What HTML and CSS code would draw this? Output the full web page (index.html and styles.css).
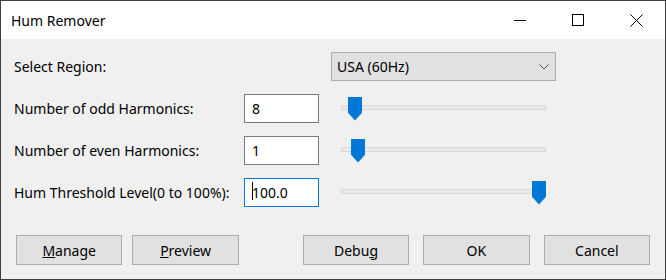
FILE: index.html
```html
<!DOCTYPE html>
<html lang="en">
<head>
  <meta charset="UTF-8" />
  <title>Hum Remover</title>
  <link rel="stylesheet" href="styles.css">
</head>
<body>
  <div class="window">
    <div class="titlebar">
      <span class="title">Hum Remover</span>
      <div class="caption">
        <span class="cap-btn">
          <svg width="12" height="12" viewBox="0 0 12 12"><path d="M0 6.5h12" stroke="#000" stroke-width="1"/></svg>
        </span>
        <span class="cap-btn">
          <svg width="12" height="12" viewBox="0 0 12 12"><rect x="0.5" y="0.5" width="11" height="11" fill="none" stroke="#000"/></svg>
        </span>
        <span class="cap-btn">
          <svg width="13" height="13" viewBox="0 0 13 13"><path d="M0.5 0.5l12 12M12.5 0.5l-12 12" stroke="#000" stroke-width="1"/></svg>
        </span>
      </div>
    </div>

    <div class="content">
      <div class="row">
        <label class="label">Select Region:</label>
        <div class="select">
          <span>USA (60Hz)</span>
          <svg width="10" height="6" viewBox="0 0 10 6"><path d="M0.5 0.5l4.5 4.5 4.5-4.5" fill="none" stroke="#555"/></svg>
        </div>
      </div>

      <div class="row">
        <label class="label" for="odd">Number of odd Harmonics:</label>
        <span class="textbox"><input id="odd" type="text" value="8" readonly></span>
        <div class="slider"><div class="track"></div><span class="thumb" style="left: 7px"></span></div>
      </div>

      <div class="row">
        <label class="label" for="even">Number of even Harmonics:</label>
        <span class="textbox"><input id="even" type="text" value="1" readonly></span>
        <div class="slider"><div class="track"></div><span class="thumb" style="left: 10px"></span></div>
      </div>

      <div class="row">
        <label class="label" for="thresh">Hum Threshold Level(0 to 100%):</label>
        <span class="textbox focused"><input id="thresh" type="text" value="100.0" readonly><span class="caret"></span></span>
        <div class="slider"><div class="track"></div><span class="thumb" style="left: 191px"></span></div>
      </div>

      <div class="buttons">
        <button class="btn"><u>M</u>anage</button>
        <button class="btn"><u>P</u>review</button>
        <button class="btn push">Debu<u>g</u></button>
        <button class="btn">OK</button>
        <button class="btn">Cancel</button>
      </div>
    </div>
  </div>
</body>
</html>
```

FILE: styles.css
```css
body {
  margin: 0;
  font-family: "Segoe UI", "Noto Sans", sans-serif;
  font-size: 14px;
  color: #000;
}
.window {
  width: 666px;
  height: 280px;
  box-sizing: border-box;
  border: 1px solid #3f3f3f;
  display: flex;
  flex-direction: column;
  background: #f0f0f0;
}
.titlebar {
  height: 38px;
  background: #fff;
  display: flex;
  align-items: center;
}
.title {
  padding-left: 10px;
  font-size: 14px;
}
.caption {
  margin-left: auto;
  display: flex;
  height: 100%;
}
.cap-btn {
  width: 58px;
  display: flex;
  align-items: center;
  justify-content: center;
}
.content {
  flex: 1;
  display: flex;
  flex-direction: column;
  padding: 13px 15px 14px 13px;
}
.row {
  display: flex;
  align-items: center;
  height: 29px;
  margin-bottom: 13px;
}
.label {
  width: 230px;
  flex-shrink: 0;
}
.select {
  margin-left: 87px;
  width: 225px;
  height: 29px;
  box-sizing: border-box;
  border: 1px solid #adadad;
  background: #e1e1e1;
  display: flex;
  align-items: center;
  justify-content: space-between;
  padding: 0 6px 0 5px;
}
.textbox {
  position: relative;
  width: 75px;
  height: 29px;
  box-sizing: border-box;
  border: 1px solid #7a7a7a;
  background: #fff;
  display: flex;
}
.textbox.focused {
  border-color: #0078d7;
}
.textbox input {
  border: none;
  outline: none;
  width: 100%;
  padding: 0 0 0 7px;
  font: inherit;
  color: #000;
  background: transparent;
}
.caret {
  position: absolute;
  left: 7px;
  top: 3px;
  width: 1px;
  height: 18px;
  background: #000;
}
.slider {
  position: relative;
  margin-left: 22px;
  width: 205px;
  height: 24px;
}
.track {
  margin-top: 8px;
  height: 5px;
  box-sizing: border-box;
  border: 1px solid #d9d9d9;
  background: #e7eaea;
}
.thumb {
  position: absolute;
  top: 0;
  width: 14px;
  height: 24px;
  background: #0078d7;
  clip-path: polygon(0 0, 100% 0, 100% 68%, 50% 100%, 0 68%);
}
.buttons {
  margin-top: auto;
  display: flex;
  gap: 10px;
  padding-left: 2px;
}
.btn {
  width: 107px;
  height: 30px;
  border: 1px solid #adadad;
  background: #e1e1e1;
  font: inherit;
  color: #000;
  padding: 0;
}
.btn.push {
  margin-left: 54px;
}
.btn + .btn.push ~ .btn {
  margin-left: 4px;
}
```
